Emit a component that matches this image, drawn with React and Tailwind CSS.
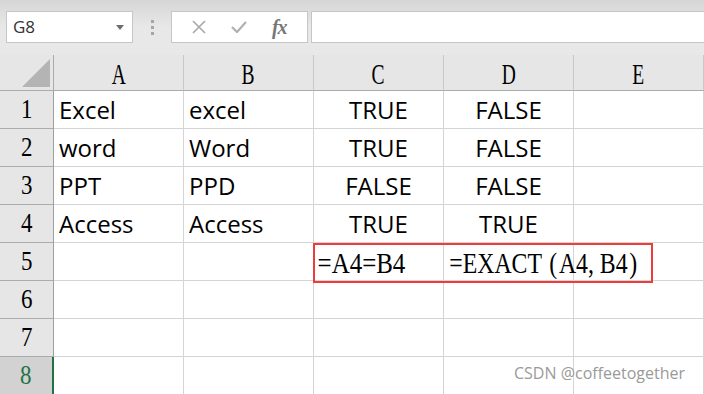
import { Fragment } from 'react';

const cols = ['A', 'B', 'C', 'D', 'E'];

const rows = [
  ['Excel', 'excel', 'TRUE', 'FALSE', ''],
  ['word', 'Word', 'TRUE', 'FALSE', ''],
  ['PPT', 'PPD', 'FALSE', 'FALSE', ''],
  ['Access', 'Access', 'TRUE', 'TRUE', ''],
  ['', '', '', '', ''],
  ['', '', '', '', ''],
  ['', '', '', '', ''],
  ['', '', '', '', ''],
];

const serif = { fontFamily: '"Liberation Serif", "Times New Roman", serif' };

const Toolbar = () => (
  <div className="h-[55px] flex items-start pt-[11px] pl-[6px] bg-gradient-to-b from-[#d6d6d6] via-[#e8e8e8] to-[#e8e8e8]">
    {/* name box */}
    <div className="w-[127px] h-[32px] bg-white border border-[#c6c6c6] flex items-center justify-between pl-[6px] pr-[8px]">
      <span className="text-[17px] text-[#333] font-['Open_Sans',sans-serif]">G8</span>
      <svg width="8" height="5" viewBox="0 0 8 5"><path d="M0 0h8L4 5z" fill="#6d6d6d" /></svg>
    </div>
    {/* grip dots */}
    <div className="w-[38px] h-[32px] flex flex-col items-center justify-center gap-[3px]">
      <div className="w-[3px] h-[3px] bg-[#a6a6a6]" />
      <div className="w-[3px] h-[3px] bg-[#a6a6a6]" />
      <div className="w-[3px] h-[3px] bg-[#a6a6a6]" />
    </div>
    {/* cancel / enter / fx */}
    <div className="w-[137px] h-[32px] bg-white border border-[#c6c6c6] flex items-center justify-around px-[8px]">
      <svg width="14" height="14" viewBox="0 0 14 14">
        <path d="M1 1L13 13M13 1L1 13" stroke="#a8a8a8" strokeWidth="1.6" />
      </svg>
      <svg width="16" height="12" viewBox="0 0 16 12">
        <path d="M1 6L6 11L15 1" stroke="#b0b0b0" strokeWidth="2.2" fill="none" />
      </svg>
      <span className="text-[20px] italic font-bold text-[#777] tracking-[-1px]" style={serif}>fx</span>
    </div>
    <div className="flex-1 ml-[3px] h-[32px] bg-white border border-[#c6c6c6] border-r-0" />
  </div>
);

const Cell = ({ value, col }) => {
  const centered = col === 2 || col === 3;
  return (
    <div
      className={`border-r border-b border-[#d4d4d4] bg-white flex items-center text-[24px] text-black font-['Open_Sans',sans-serif] ${
        centered ? 'justify-center' : 'pl-[5px]'
      }`}
    >
      {value}
    </div>
  );
};

export default function App() {
  return (
    <div className="w-[704px] h-[394px] overflow-hidden bg-[#e6e6e6] relative">
      <Toolbar />
      <div className="grid grid-cols-[54px_130px_130px_130px_130px_1fr] grid-rows-[36px_repeat(8,38px)]">
        {/* corner */}
        <div className="border-r border-b border-[#ababab] bg-[#e6e6e6] flex items-end justify-end pr-[3px] pb-[3px]">
          <svg width="28" height="28" viewBox="0 0 28 28"><path d="M28 0V28H0z" fill="#b4b4b4" /></svg>
        </div>
        {cols.map((c) => (
          <div
            key={c}
            className="border-r border-b border-r-[#c8c8c8] border-b-[#ababab] bg-[#e6e6e6] flex items-center justify-center pt-[3px]"
          >
            <span className="inline-block text-[30px] leading-none text-black scale-x-[0.65]" style={serif}>
              {c}
            </span>
          </div>
        ))}
        {rows.map((r, i) => (
          <Fragment key={i}>
            <div
              className={`border-b flex items-center justify-center border-b-[#ababab] ${
                i === 7
                  ? 'bg-[#d2d2d2] border-r-2 border-r-[#217346] text-[#217346]'
                  : 'bg-[#e6e6e6] border-r border-r-[#9e9e9e] text-black'
              }`}
            >
              <span className="inline-block text-[27px] leading-none scale-x-[0.85]" style={serif}>
                {i + 1}
              </span>
            </div>
            {r.map((v, j) => (
              <Cell key={j} value={v} col={j} />
            ))}
          </Fragment>
        ))}
      </div>

      {/* formulas in row 5, highlighted */}
      <div className="absolute left-[313px] top-[243px] w-[340px] h-[40px] border-2 border-[#ee3b3b] flex items-center overflow-hidden">
        <span className="inline-block shrink-0 w-[131px] pl-[3px] text-[29px] leading-none text-black origin-left scale-x-[0.86] whitespace-nowrap" style={serif}>
          =A4=B4
        </span>
        <span className="inline-block shrink-0 pl-[4px] text-[29px] leading-none text-black origin-left scale-x-[0.82] whitespace-nowrap" style={serif}>
          =EXACT<span className="pl-[9px] pr-[2px]">(</span>A4,&nbsp;B4<span className="pl-[2px]">)</span>
        </span>
      </div>

      {/* watermark */}
      <div className="absolute left-[514px] top-[361px] text-[16px] text-[#9a9a9a] font-['Open_Sans',sans-serif]">
        CSDN @coffeetogether
      </div>
    </div>
  );
}
